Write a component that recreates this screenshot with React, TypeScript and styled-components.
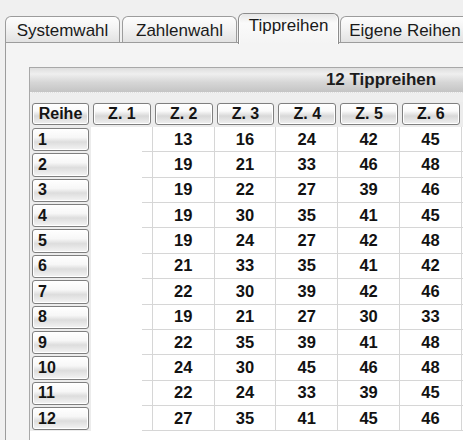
import React from "react";
import styled, { createGlobalStyle, css } from "styled-components";

const Global = createGlobalStyle`
  html, body { margin: 0; padding: 0; overflow: hidden; background: #f0f0f0; }
  body { font-family: "Liberation Sans", Arial, sans-serif; color: #111; }
`;

const Screen = styled.div`
  width: 463px;
  height: 440px;
  overflow: hidden;
  padding: 14px 0 0 5px;
  box-sizing: border-box;
  background: #f0f0f0;
`;

const TabBar = styled.div`
  display: flex;
  align-items: flex-end;
  gap: 2px;
  height: 28px;
  position: relative;
  z-index: 2;
`;

const Tab = styled.div<{ $w: number; $active?: boolean }>`
  width: ${(p) => p.$w}px;
  flex: none;
  box-sizing: border-box;
  height: 26px;
  border: 1px solid #9c9c9c;
  border-bottom: none;
  border-radius: 6px 6px 0 0;
  background: linear-gradient(#fdfdfd 0%, #f3f3f3 45%, #e2e2e2 100%);
  display: flex;
  align-items: center;
  justify-content: center;
  font-size: 17px;
  color: #1a1a1a;
  white-space: nowrap;
  padding-top: 2px;
  ${(p) =>
    p.$active &&
    css`
      height: 31px;
      margin: 0 -1px -2px;
      padding-top: 0;
      padding-bottom: 6px;
      border-color: #8c8c8c;
      background: linear-gradient(#e6e6e6 0%, #fafafa 30%, #f4f4f4 100%);
      box-shadow: inset 1px 0 0 #fff, inset -1px 0 0 #fff;
    `}
`;

const Panel = styled.div`
  border-top: 1px solid #9c9c9c;
  border-left: 1px solid #9c9c9c;
  background: #f4f4f4;
  padding: 24px 0 0 23px;
  height: 420px;
  position: relative;
  z-index: 1;
`;

const Table = styled.div`
  width: 702px;
  border: 1px solid #a8a8a8;
  background: #fff;
  height: 400px;
`;

const TitleBar = styled.div`
  height: 24px;
  display: flex;
  align-items: center;
  justify-content: center;
  font-weight: bold;
  font-size: 17px;
  color: #1c1c1c;
  background: linear-gradient(#dedede 0%, #efefef 25%, #d6d6d6 60%, #c4c4c4 100%);
  border-bottom: 1px dotted #f4f4f4;
  box-shadow: 0 1px 0 #c8c8c8;
`;

const Strip = styled.div`
  height: 9px;
  background: #eeeeee;
`;

const cols = "61px repeat(10, 61.8px)";

const HeaderRow = styled.div`
  display: grid;
  grid-template-columns: ${cols};
  height: 25px;
  background: #ececec;
`;

const BodyRow = styled.div`
  display: grid;
  grid-template-columns: ${cols};
  height: 25.36px;
`;

const HeadButton = styled.div<{ $left?: boolean }>`
  margin: 1px 2px 2px 2px;
  border: 1px solid #7f7f7f;
  border-radius: 3px;
  background: linear-gradient(#ffffff 0%, #fafafa 35%, #d8d8d8 60%, #f0f0f0 100%);
  box-shadow: inset 0 0 0 1px #fff;
  display: flex;
  align-items: center;
  justify-content: ${(p) => (p.$left ? "flex-start" : "center")};
  padding-left: ${(p) => (p.$left ? "5px" : "0")};
  font-weight: bold;
  font-size: 16px;
  color: #141414;
  overflow: hidden;
  white-space: nowrap;
`;

const RowHeadCell = styled.div`
  background: #ececec;
  display: flex;
  padding: 1px 2px 1px 2px;
`;

const RowButton = styled(HeadButton)`
  margin: 0;
  flex: 1;
  background: linear-gradient(#ffffff 0%, #f7f7f7 40%, #dddddd 62%, #f4f4f4 100%);
`;

const Cell = styled.div<{ $empty?: boolean }>`
  box-sizing: border-box;
  border-right: 1px solid #d6d6d6;
  border-bottom: ${(p) => (p.$empty ? "none" : "1px solid #d6d6d6")};
  background: #fff;
  display: flex;
  align-items: center;
  justify-content: center;
  font-weight: bold;
  font-size: 16.5px;
  color: #121212;
  position: relative;
  ${(p) =>
    p.$empty &&
    css`
      &::after {
        content: "";
        position: absolute;
        right: 0;
        bottom: 0;
        width: 10px;
        height: 1px;
        background: #d6d6d6;
      }
    `}
`;

const rows = [
  [13, 16, 24, 42, 45],
  [19, 21, 33, 46, 48],
  [19, 22, 27, 39, 46],
  [19, 30, 35, 41, 45],
  [19, 24, 27, 42, 48],
  [21, 33, 35, 41, 42],
  [22, 30, 39, 42, 46],
  [19, 21, 27, 30, 33],
  [22, 35, 39, 41, 48],
  [24, 30, 45, 46, 48],
  [22, 24, 33, 39, 45],
  [27, 35, 41, 45, 46],
];

const tabs = [
  { label: "Systemwahl", w: 115 },
  { label: "Zahlenwahl", w: 115 },
  { label: "Tippreihen", w: 101, active: true },
  { label: "Eigene Reihen", w: 130 },
];

const headers = ["Z. 1", "Z. 2", "Z. 3", "Z. 4", "Z. 5", "Z. 6"];

export default function App() {
  return (
    <Screen>
      <Global />
      <TabBar>
        {tabs.map((t) => (
          <Tab key={t.label} $w={t.w} $active={t.active}>
            {t.label}
          </Tab>
        ))}
      </TabBar>
      <Panel>
        <Table>
          <TitleBar>12 Tippreihen</TitleBar>
          <Strip />
          <HeaderRow>
            <HeadButton>Reihe</HeadButton>
            {headers.map((h) => (
              <HeadButton key={h}>{h}</HeadButton>
            ))}
            {Array.from({ length: 4 }, (_, i) => (
              <HeadButton key={"x" + i} />
            ))}
          </HeaderRow>
          {rows.map((r, i) => (
            <BodyRow key={i}>
              <RowHeadCell>
                <RowButton $left>{i + 1}</RowButton>
              </RowHeadCell>
              <Cell $empty />
              {r.map((n, j) => (
                <Cell key={j}>{n}</Cell>
              ))}
              {Array.from({ length: 4 }, (_, k) => (
                <Cell key={"e" + k} />
              ))}
            </BodyRow>
          ))}
        </Table>
      </Panel>
    </Screen>
  );
}
